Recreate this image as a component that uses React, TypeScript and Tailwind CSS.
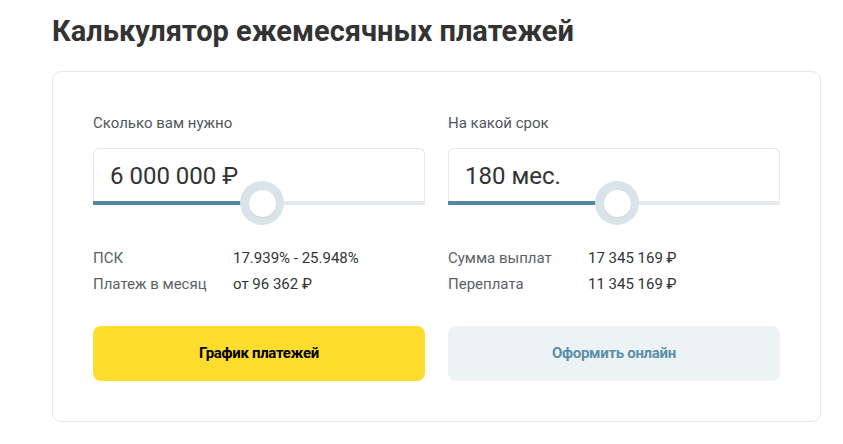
import React from "react";

const font = { fontFamily: "Roboto, 'Noto Sans', sans-serif" };

function Slider({ value, pct }: { value: string; pct: number }) {
  return (
    <div className="relative mt-[15px]">
      <div className="h-[53px] border border-b-0 border-[#e6e8ea] rounded-t-[6px] flex items-center pl-[16px] text-[24px] text-[#333333] pt-[1px]">
        {value}
      </div>
      <div className="h-[4px] bg-[#e5e9eb] relative">
        <div className="h-full bg-[#4f87a4]" style={{ width: `${pct}px` }} />
      </div>
      <div
        className="absolute w-[44px] h-[44px] rounded-full bg-[#d9e4e9] flex items-center justify-center"
        style={{ left: `${pct + 12 - 22}px`, top: `${55 - 22}px` }}
      >
        <div className="w-[27px] h-[27px] rounded-full bg-white shadow-[0_1px_2px_rgba(0,0,0,0.06)]" />
      </div>
    </div>
  );
}

function Stat({ label, value }: { label: string; value: string }) {
  return (
    <div className="flex h-[26px] items-center text-[15px]">
      <div className="w-[140px] text-[#5c6166]">{label}</div>
      <div className="text-[#333333]">{value}</div>
    </div>
  );
}

export default function App() {
  return (
    <div className="min-h-[444px] bg-white pl-[52px] pt-[14px]" style={font}>
      <h1 className="text-[29px] leading-[34px] font-bold text-[#333333]">
        Калькулятор ежемесячных платежей
      </h1>
      <div className="mt-[23px] w-[769px] border border-[#e8e8e8] rounded-[9px] px-[40px] pt-[41px] pb-[40px] grid grid-cols-2 gap-x-[23px]">
        <div className="flex flex-col">
          <div className="text-[15px] leading-[20px] text-[#51575c]">Сколько вам нужно</div>
          <Slider value="6 000 000 ₽" pct={157} />
          <div className="mt-[40px]">
            <Stat label="ПСК" value="17.939% - 25.948%" />
            <Stat label="Платеж в месяц" value="от 96 362 ₽" />
          </div>
          <button className="mt-[29px] h-[55px] rounded-[8px] bg-[#ffdd2d] text-[15px] font-bold text-black tracking-[-0.3px]">
            График платежей
          </button>
        </div>
        <div className="flex flex-col">
          <div className="text-[15px] leading-[20px] text-[#51575c]">На какой срок</div>
          <Slider value="180 мес." pct={157} />
          <div className="mt-[40px]">
            <Stat label="Сумма выплат" value="17 345 169 ₽" />
            <Stat label="Переплата" value="11 345 169 ₽" />
          </div>
          <button className="mt-[29px] h-[55px] rounded-[8px] bg-[#edf3f5] text-[15px] font-bold text-[#5a8fa8] tracking-[-0.3px]">
            Оформить онлайн
          </button>
        </div>
      </div>
    </div>
  );
}
